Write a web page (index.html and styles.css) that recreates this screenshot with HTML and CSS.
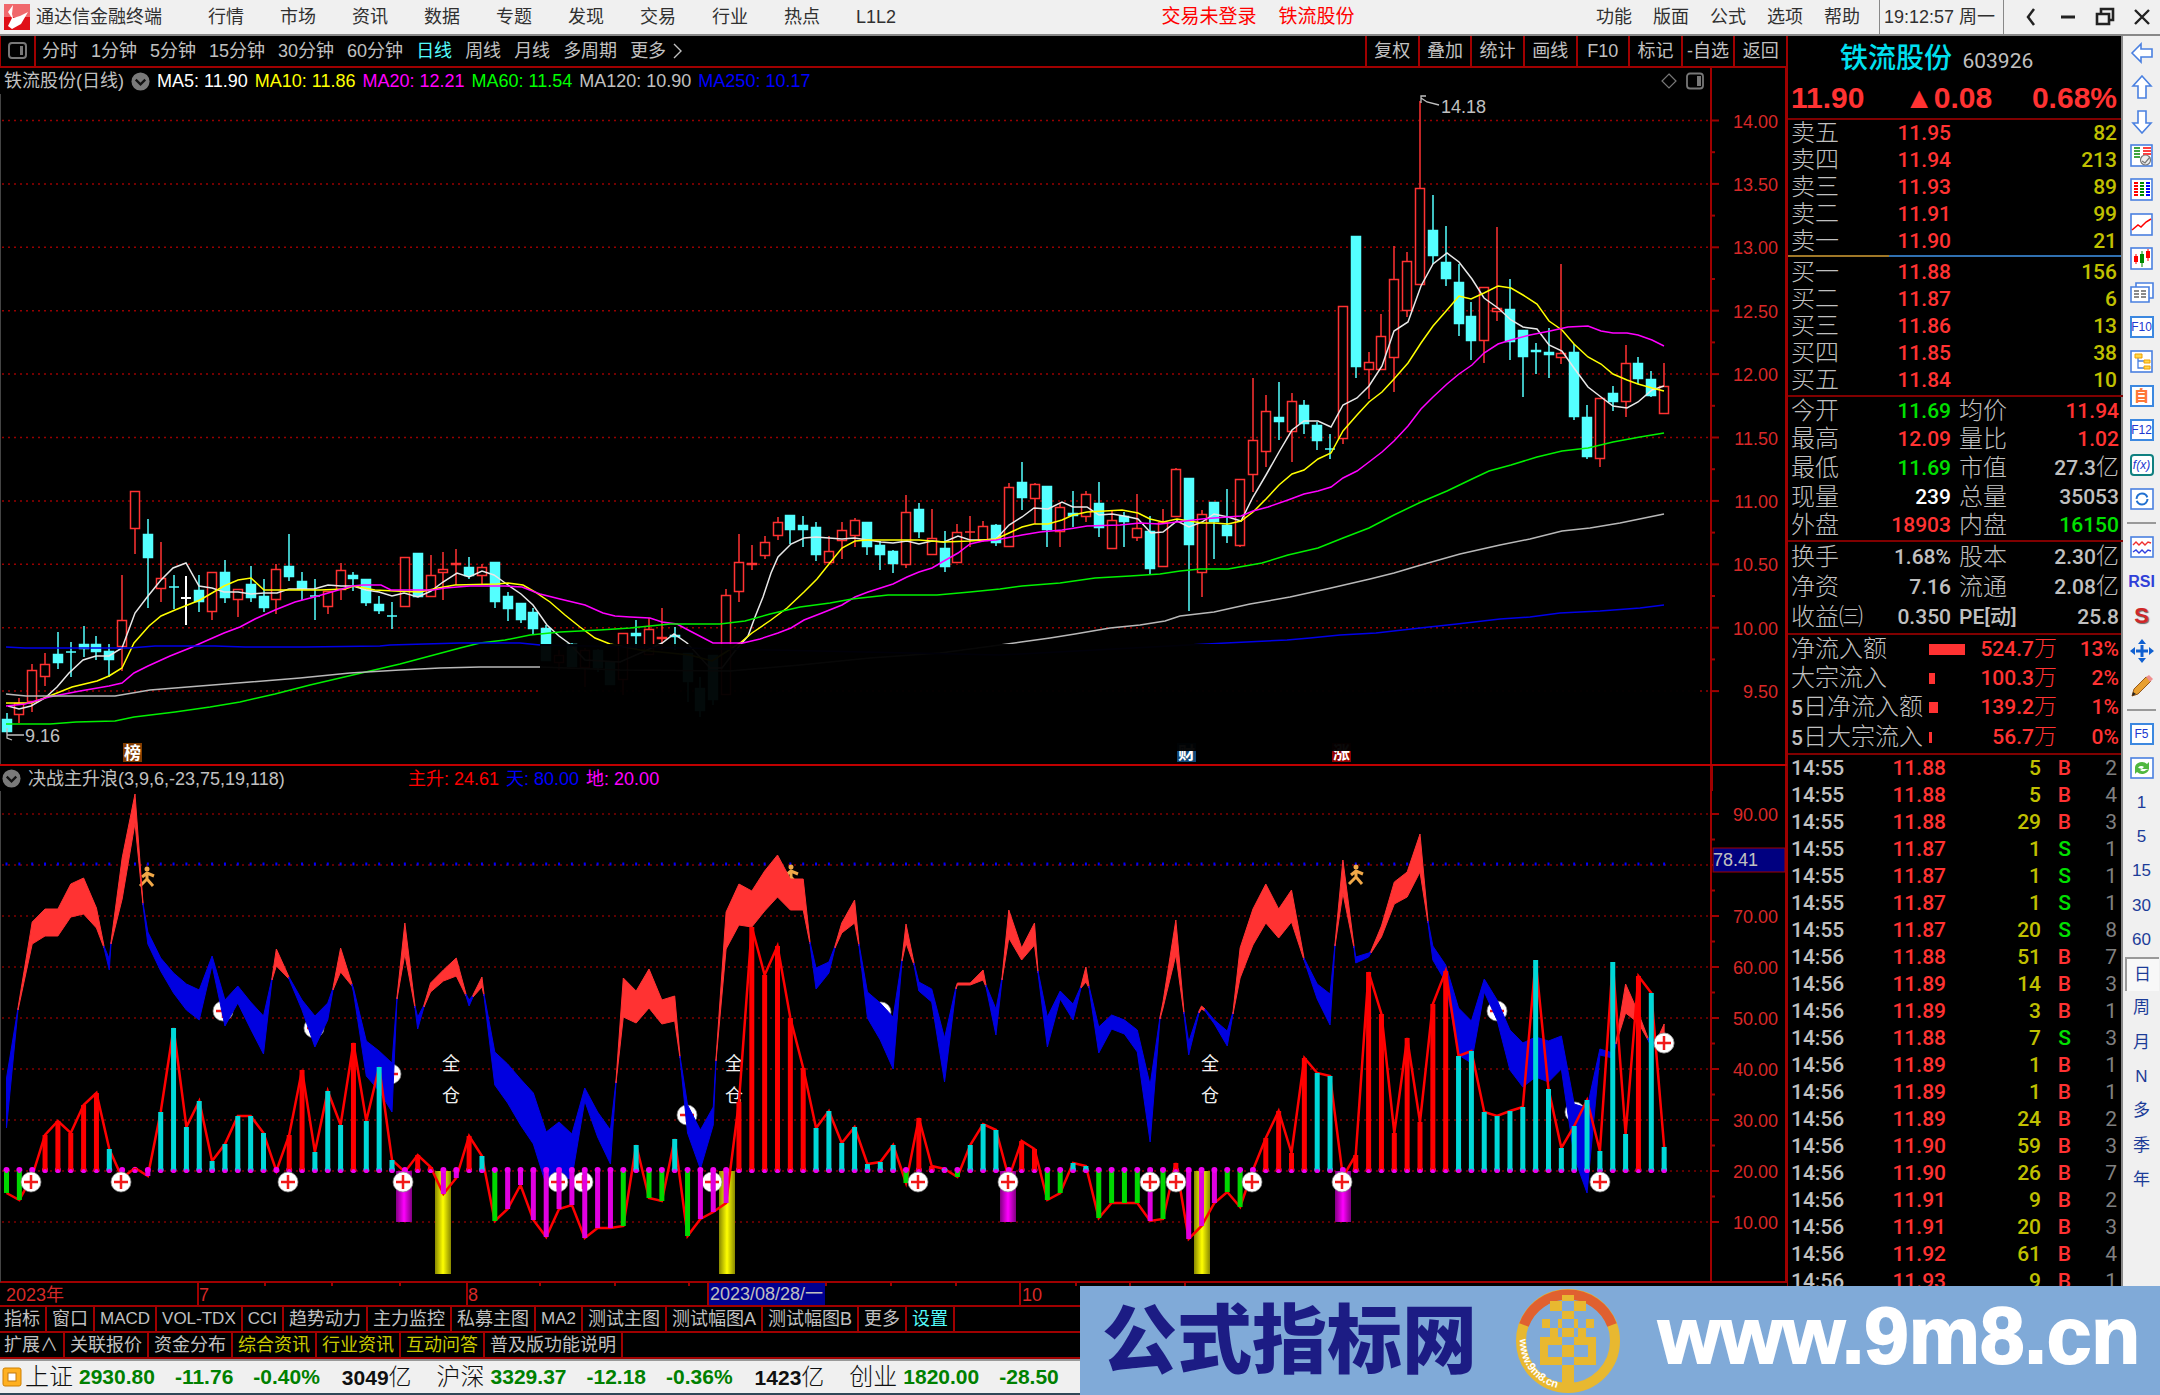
FILE: index.html
```html
<!DOCTYPE html>
<html lang="zh-CN">
<head>
<meta charset="utf-8">
<title>通达信金融终端</title>
<link rel="stylesheet" href="styles.css">
</head>
<body>
<header class="topbar">
  <svg class="logo" viewBox="0 0 26 26"><rect width="26" height="26" fill="#e01018"/><path d="M0 0h26v13H0z" fill="#f0686c"/><path d="M9 1 4 8l4 6-4 8 4 3 9-5 7-12-8 4-7 2-1-4z" fill="#fff"/></svg>
  <span class="brand">通达信金融终端</span>
  <nav class="menu">
    <a href="#">行情</a><a href="#">市场</a><a href="#">资讯</a><a href="#">数据</a><a href="#">专题</a><a href="#">发现</a><a href="#">交易</a><a href="#">行业</a><a href="#">热点</a><a href="#">L1L2</a>
  </nav>
  <div class="alerts"><a href="#">交易未登录</a><a href="#">铁流股份</a></div>
  <nav class="menu menu-right">
    <a href="#">功能</a><a href="#">版面</a><a href="#">公式</a><a href="#">选项</a><a href="#">帮助</a>
  </nav>
  <time class="clock">19:12:57 周一</time>
  <div class="winctl">
    <button type="button" aria-label="返回"><svg viewBox="0 0 20 20"><path d="M13 2 7 10l6 8" fill="none" stroke="#222" stroke-width="2.5"/></svg></button>
    <button type="button" aria-label="最小化"><svg viewBox="0 0 20 20"><path d="M3 10h14" stroke="#222" stroke-width="3"/></svg></button>
    <button type="button" aria-label="还原"><svg viewBox="0 0 20 20"><path d="M6 6V2h12v11h-4M2 7h12v10H2z" fill="none" stroke="#222" stroke-width="2.6"/></svg></button>
    <button type="button" aria-label="关闭"><svg viewBox="0 0 20 20"><path d="m3 3 14 14M17 3 3 17" stroke="#222" stroke-width="2.4"/></svg></button>
  </div>
</header>

<main class="work">
  <section class="charts">
    <div class="periods">
      <button type="button" class="dock" aria-label="侧栏"><svg viewBox="0 0 20 20"><rect x="1" y="2" width="17" height="15" rx="3" fill="none" stroke="#777" stroke-width="2"/><path d="M12 5h3v9h-3z" fill="#777"/></svg></button>
      <nav class="spans">
        <a href="#">分时</a><a href="#">1分钟</a><a href="#">5分钟</a><a href="#">15分钟</a><a href="#">30分钟</a><a href="#">60分钟</a><a href="#" class="on">日线</a><a href="#">周线</a><a href="#">月线</a><a href="#">多周期</a><a href="#">更多<svg class="more" viewBox="0 0 10 16"><path d="m1 1 7 7-7 7" fill="none" stroke="#c0c0c0" stroke-width="1.4"/></svg></a>
      </nav>
      <div class="tools">
        <button type="button">复权</button><button type="button">叠加</button><button type="button">统计</button><button type="button">画线</button><button type="button">F10</button><button type="button">标记</button><button type="button">-自选</button><button type="button">返回</button>
      </div>
    </div>
    <div class="legend">
      <div class="legend-items">
        <span class="t-gray">铁流股份(日线)</span>
        <svg class="chev" viewBox="0 0 20 20"><circle cx="10" cy="10" r="9.5" fill="#7a7a7a"/><path d="m5 8 5 5 5-5" fill="none" stroke="#111" stroke-width="2.4"/></svg>
        <span class="t-white">MA5: 11.90</span><span class="t-yellow">MA10: 11.86</span><span class="t-mag">MA20: 12.21</span><span class="t-green">MA60: 11.54</span><span class="t-gray">MA120: 10.90</span><span class="t-blue">MA250: 10.17</span>
      </div>
      <svg class="marks" viewBox="0 0 44 18"><path d="m9 2 7 7-7 7-7-7z" fill="none" stroke="#777" stroke-width="1.2"/><rect x="27" y="1.500" width="16" height="15" rx="3" fill="none" stroke="#777" stroke-width="1.8"/><path d="M37 4h4v10h-4z" fill="#777"/></svg>
      <div class="legend-axis"></div>
    </div>
    <svg id="price" class="plot" viewBox="0 94 1787 670" role="img" aria-label="日线"></svg>
    <div class="legend legend-sub">
      <div class="legend-items">
        <svg class="chev" viewBox="0 0 20 20"><circle cx="10" cy="10" r="9.5" fill="#7a7a7a"/><path d="m5 8 5 5 5-5" fill="none" stroke="#111" stroke-width="2.4"/></svg>
        <span class="t-gray formula">决战主升浪(3,9,6,-23,75,19,118)</span>
        <span class="t-red">主升: 24.61</span><span class="t-blue">天: 80.00</span><span class="t-mag">地: 20.00</span>
      </div>
      <div class="legend-axis boxed"></div>
    </div>
    <svg id="wave" class="plot" viewBox="0 791 1787 516" role="img" aria-label="决战主升浪"></svg>
    <nav class="tabs">
      <a href="#">指标</a><a href="#">窗口</a><a href="#" class="latin">MACD</a><a href="#" class="latin">VOL-TDX</a><a href="#" class="latin">CCI</a><a href="#">趋势动力</a><a href="#">主力监控</a><a href="#">私募主图</a><a href="#" class="latin">MA2</a><a href="#">测试主图</a><a href="#">测试幅图A</a><a href="#">测试幅图B</a><a href="#">更多</a><a href="#" class="on">设置</a>
    </nav>
    <nav class="tabs">
      <a href="#">扩展∧</a><a href="#">关联报价</a><a href="#">资金分布</a><a href="#" class="y">综合资讯</a><a href="#" class="y">行业资讯</a><a href="#" class="y">互动问答</a><a href="#">普及版功能说明</a>
    </nav>
  </section>

  <aside class="quote">
    <h1 class="stock"><span class="name">铁流股份</span> <span class="code">603926</span></h1>
    <div class="last"><b>11.90</b><b>▲0.08</b><b>0.68%</b></div>
    <table class="book asks">
      <tr><th>卖五</th><td>11.95</td><td>82</td></tr>
      <tr><th>卖四</th><td>11.94</td><td>213</td></tr>
      <tr><th>卖三</th><td>11.93</td><td>89</td></tr>
      <tr><th>卖二</th><td>11.91</td><td>99</td></tr>
      <tr><th>卖一</th><td>11.90</td><td>21</td></tr>
    </table>
    <div class="ratio"></div>
    <table class="book bids">
      <tr><th>买一</th><td>11.88</td><td>156</td></tr>
      <tr><th>买二</th><td>11.87</td><td>6</td></tr>
      <tr><th>买三</th><td>11.86</td><td>13</td></tr>
      <tr><th>买四</th><td>11.85</td><td>38</td></tr>
      <tr><th>买五</th><td>11.84</td><td>10</td></tr>
    </table>
    <table class="stats day">
      <tr><th>今开</th><td class="g">11.69</td><th>均价</th><td class="r">11.94</td></tr>
      <tr><th>最高</th><td class="r">12.09</td><th>量比</th><td class="r">1.02</td></tr>
      <tr><th>最低</th><td class="g">11.69</td><th>市值</th><td>27.3<i>亿</i></td></tr>
      <tr><th>现量</th><td class="w">239</td><th>总量</th><td>35053</td></tr>
      <tr><th>外盘</th><td class="r">18903</td><th>内盘</th><td class="g">16150</td></tr>
    </table>
    <table class="stats base">
      <tr><th>换手</th><td>1.68%</td><th>股本</th><td>2.30<i>亿</i></td></tr>
      <tr><th>净资</th><td>7.16</td><th>流通</th><td>2.08<i>亿</i></td></tr>
      <tr><th>收益㈢</th><td>0.350</td><th class="pe">PE[动]</th><td>25.8</td></tr>
    </table>
    <table class="flow">
      <tr><th>净流入额</th><td><span class="bar" style="width:36px"></span></td><td>524.7<i>万</i></td><td>13%</td></tr>
      <tr><th>大宗流入</th><td><span class="bar" style="width:6px"></span></td><td>100.3<i>万</i></td><td>2%</td></tr>
      <tr><th><span class="pe">5</span>日净流入额</th><td><span class="bar" style="width:9px"></span></td><td>139.2<i>万</i></td><td>1%</td></tr>
      <tr><th><span class="pe">5</span>日大宗流入</th><td><span class="bar" style="width:3px"></span></td><td>56.7<i>万</i></td><td>0%</td></tr>
    </table>
    <table class="ticks">
      <tr><td>14:55</td><td>11.88</td><td>5</td><td>B</td><td>2</td></tr>
      <tr><td>14:55</td><td>11.88</td><td>5</td><td>B</td><td>4</td></tr>
      <tr><td>14:55</td><td>11.88</td><td>29</td><td>B</td><td>3</td></tr>
      <tr class="s"><td>14:55</td><td>11.87</td><td>1</td><td>S</td><td>1</td></tr>
      <tr class="s"><td>14:55</td><td>11.87</td><td>1</td><td>S</td><td>1</td></tr>
      <tr class="s"><td>14:55</td><td>11.87</td><td>1</td><td>S</td><td>1</td></tr>
      <tr class="s"><td>14:55</td><td>11.87</td><td>20</td><td>S</td><td>8</td></tr>
      <tr><td>14:56</td><td>11.88</td><td>51</td><td>B</td><td>7</td></tr>
      <tr><td>14:56</td><td>11.89</td><td>14</td><td>B</td><td>3</td></tr>
      <tr><td>14:56</td><td>11.89</td><td>3</td><td>B</td><td>1</td></tr>
      <tr class="s"><td>14:56</td><td>11.88</td><td>7</td><td>S</td><td>3</td></tr>
      <tr><td>14:56</td><td>11.89</td><td>1</td><td>B</td><td>1</td></tr>
      <tr><td>14:56</td><td>11.89</td><td>1</td><td>B</td><td>1</td></tr>
      <tr><td>14:56</td><td>11.89</td><td>24</td><td>B</td><td>2</td></tr>
      <tr><td>14:56</td><td>11.90</td><td>59</td><td>B</td><td>3</td></tr>
      <tr><td>14:56</td><td>11.90</td><td>26</td><td>B</td><td>7</td></tr>
      <tr><td>14:56</td><td>11.91</td><td>9</td><td>B</td><td>2</td></tr>
      <tr><td>14:56</td><td>11.91</td><td>20</td><td>B</td><td>3</td></tr>
      <tr><td>14:56</td><td>11.92</td><td>61</td><td>B</td><td>4</td></tr>
      <tr><td>14:56</td><td>11.93</td><td>9</td><td>B</td><td>1</td></tr>
    </table>
  </aside>

  <aside class="rail">
    <div class="group long">
      <button type="button" aria-label="左"><svg viewBox="0 0 24 24"><path d="M2 12 11 3v5h11v8H11v5z" fill="#fff" stroke="#4a80e0" stroke-width="1.6"/></svg></button>
      <button type="button" aria-label="上"><svg viewBox="0 0 24 24"><path d="m12 1 9 10h-5v12H8V11H3z" fill="#fff" stroke="#4a80e0" stroke-width="1.6"/></svg></button>
      <button type="button" aria-label="下"><svg viewBox="0 0 24 24"><path d="m12 23 9-10h-5V1H8v12H3z" fill="#fff" stroke="#4a80e0" stroke-width="1.6"/></svg></button>
      <button type="button" aria-label="报价"><svg viewBox="0 0 24 24"><rect class="fr" x="1" y="1" width="21" height="21"/><path d="M4 4h6M4 7h6M4 10h6M4 13h6" stroke="#080" stroke-width="1.6"/><path d="M13 4h8M13 7h8M13 10h8" stroke="#f00" stroke-width="1.6"/><circle cx="15.500" cy="16" r="5" fill="#eee" stroke="#777" stroke-width="1.2"/><path d="m12 17 3 2 5-6" fill="none" stroke="#777" stroke-width="1.2"/></svg></button>
      <button type="button" aria-label="列表"><svg viewBox="0 0 24 24"><rect class="fr" x="1" y="1" width="21" height="21"/><path d="M4 5h4M4 8h4M4 11h4M4 14h4M4 17h4" stroke="#f00" stroke-width="1.8"/><path d="M10 5h4M10 8h4M10 11h4M10 14h4M10 17h4" stroke="#080" stroke-width="1.8"/><path d="M16 5h4M16 8h4M16 11h4M16 14h4M16 17h4" stroke="#00f" stroke-width="1.8"/></svg></button>
      <button type="button" aria-label="走势"><svg viewBox="0 0 24 24"><rect class="fr" x="1" y="1" width="21" height="21"/><path d="m2 17 6-5 3 2 5-5 5-3" fill="none" stroke="#f00" stroke-width="1.5"/></svg></button>
      <button type="button" aria-label="K线"><svg viewBox="0 0 24 24"><rect class="fr" x="1" y="1" width="21" height="21"/><path d="M6 7v10M18 2v12" stroke="#f00"/><path d="M4 9h4v6H4zM16 4h4v7h-4z" fill="#f00"/><path d="M12 4v16" stroke="#080"/><path d="M10 7h4v9h-4z" fill="#080"/></svg></button>
      <button type="button" aria-label="文档"><svg viewBox="0 0 24 24"><path class="fr" d="M6 2h17v15H6z"/><path class="fr" d="M1 6h18v15H1z"/><path d="M4 10h5M4 13h5M4 16h5M11 10h5M11 13h5M11 16h5" stroke="#666" stroke-width="1.3"/></svg></button>
      <button type="button" class="key">F10</button>
      <button type="button" aria-label="树"><svg viewBox="0 0 24 24"><rect class="fr" x="1" y="1" width="21" height="21"/><path d="M8 7v11h6M8 11h6" fill="none" stroke="#4a80e0" stroke-width="1.3"/><path d="M5 4h7v4H5zM14 10h6v3h-6zM14 16h6v3h-6z" fill="#ffd84a" stroke="#f0a000"/></svg></button>
      <button type="button" class="key zi">自</button>
      <button type="button" class="key">F12</button>
      <button type="button" class="key fx">f(x)</button>
      <button type="button" aria-label="刷新"><svg viewBox="0 0 24 24"><rect class="fr" x="1" y="2" width="22" height="20"/><circle cx="12" cy="12" r="5.500" fill="none" stroke="#2070d0" stroke-width="2" stroke-dasharray="15 2"/></svg></button>
    </div>
    <hr>
    <div class="group short">
      <button type="button" aria-label="叠加"><svg viewBox="0 0 24 24"><rect class="fr" x="1" y="2" width="22" height="20"/><path d="m3 10 3-3 3 3 3-3 3 3 3-3 3 1" fill="none" stroke="#f03030" stroke-width="1.4"/><path d="m3 17 3-2 3 3 3-3 3 3 3-3 3 1" fill="none" stroke="#3040e0" stroke-width="1.4"/></svg></button>
      <button type="button" class="rsi">RSI</button>
      <button type="button" class="dollar">S</button>
      <button type="button" aria-label="移动"><svg viewBox="0 0 24 24"><path d="m12 0 4 5H8zM12 24l4-5H8zM0 12l5-4v8zM24 12l-5-4v8zM10.500 6h3v12h-3zM6 10.500h12v3H6z" fill="#1060d0"/></svg></button>
      <button type="button" aria-label="画笔"><svg viewBox="0 0 24 24"><path d="m2 22 2-7L16 3l5 4L8 20z" fill="#e8a030" stroke="#94581c"/><path d="m16 3 3-2 4 4-3 3z" fill="#f09090"/><path d="m2 22 1-4 3 2z" fill="#222"/></svg></button>
    </div>
    <hr>
    <div class="group long">
      <button type="button" class="key">F5</button>
      <button type="button" aria-label="更新"><svg viewBox="0 0 24 24"><rect class="fr" x="1" y="2" width="22" height="20"/><path d="M5 11a7 6 0 0 1 12-3l2-2v7h-7l2-2a4 4 0 0 0-6 1zM19 13a7 6 0 0 1-12 3l-2 2v-7l7 2-2 1a4 4 0 0 0 6 0z" fill="#50b840"/></svg></button>
      <button type="button">1</button><button type="button">5</button><button type="button">15</button><button type="button">30</button><button type="button">60</button><button type="button" class="down">日</button><button type="button">周</button><button type="button">月</button><button type="button">N</button><button type="button">多</button><button type="button">季</button><button type="button">年</button>
    </div>
  </aside>
</main>

<footer class="status">
  <svg class="home" viewBox="0 0 20 20"><rect x="1" y="1" width="18" height="18" rx="2" fill="#ffb020" stroke="#d08000"/><rect x="6" y="6" width="8" height="8" fill="#fff" stroke="#c07810"/></svg>
  <div class="idx"><span class="lbl">上证</span><b>2930.80</b><b>-11.76</b><b>-0.40%</b><b class="amt">3049<i>亿</i></b></div>
  <div class="idx"><span class="lbl">沪深</span><b>3329.37</b><b>-12.18</b><b>-0.36%</b><b class="amt">1423<i>亿</i></b></div>
  <div class="idx"><span class="lbl">创业</span><b>1820.00</b><b>-28.50</b></div>
</footer>

<div class="banner">
  <strong class="site">公式指标网</strong>
  <svg class="coin" viewBox="0 0 108 108">
    <circle cx="54" cy="54" r="47" fill="none" stroke="#e8b830" stroke-width="10"/>
    <path d="M10 38A47 47 0 0 1 98 38" fill="none" stroke="#e06030" stroke-width="10"/>
    <path d="M36 14h36v10H36zM48 8h12v92H48zM28 32h52v9H28zM36 32h8v18h-8zM64 32h8v18h-8zM26 50h56v28H26zM34 58v12h40V58z" fill="#e8b830" fill-rule="evenodd"/>
    <path id="arc" d="M6 52A48 48 0 0 0 58 102" fill="none"/>
    <text class="arc-text"><textPath href="#arc">www.9m8.cn</textPath></text>
  </svg>
  <strong class="url">www.9m8.cn</strong>
</div>
<script src="chart.js"></script>
</body>
</html>
```
FILE: styles.css
```css
* { box-sizing: border-box; }
body {
  margin: 0; min-height: 100vh; position: relative; display: flex; flex-direction: column;
  background: #000; color: #c0c0c0;
  font: 18px/24px "Liberation Sans", "Noto Sans CJK SC", sans-serif;
}
a { color: inherit; text-decoration: none; white-space: nowrap; }
button { font: inherit; color: inherit; background: none; border: 0; padding: 0; white-space: nowrap; }
table { border-collapse: collapse; table-layout: fixed; width: 100%; }
th, td { padding: 0; font-weight: inherit; }
i { font-style: normal; font-weight: 300; }

.topbar { display: flex; align-items: center; height: 36px; background: #f0f0f0; color: #303030; border-bottom: 2px solid #888; padding-left: 4px; }
.logo { width: 26px; height: 26px; margin-right: 6px; }
.brand { width: 172px; white-space: nowrap; }
.menu { display: flex; gap: 36px; }
.alerts { display: flex; gap: 22px; color: #f00; margin: 0 auto; padding-left: 24px; font-size: 19px; }
.menu-right { gap: 21px; margin-right: 19px; }
.clock { border: solid #888; border-width: 0 1px; width: 125px; line-height: 34px; padding-left: 4px; white-space: nowrap; }
.winctl { display: flex; width: 156px; justify-content: space-around; padding-left: 9px; }
.winctl button { width: 24px; height: 24px; }
.winctl svg { width: 20px; height: 20px; display: block; margin: 2px; }

.work { display: grid; grid-template-columns: minmax(0, 1fr) 336px 37px; flex: 1; }
.charts { display: flex; flex-direction: column; min-width: 0; }
.periods { display: flex; height: 32px; border-bottom: 2px solid #a00000; line-height: 30px; }
.dock { width: 36px; border: solid #a00000; border-width: 0 2px 0 1px; }
.dock svg { width: 20px; height: 20px; display: block; margin: 0 auto; }
.spans { display: flex; gap: 13px; padding-left: 6px; }
.spans .on, .tabs .on { color: #54fcfc; }
.more { width: 10px; height: 16px; margin-left: 7px; vertical-align: -2px; }
.tools { display: grid; grid-template-columns: repeat(8, 1fr); width: 422px; margin-left: auto; border-right: 1px solid #a00000; }
.tools button { border-left: 2px solid #a00000; }

.legend { display: flex; align-items: center; height: 26px; }
.legend-items { display: flex; align-items: center; gap: 7px; padding-left: 4px; white-space: nowrap; flex: 1; }
.chev { width: 19px; height: 19px; }
.marks { width: 44px; height: 18px; margin-right: 6px; }
.legend-axis { width: 77px; align-self: stretch; border: solid #a00000; border-width: 0 2px; }
.legend-sub { height: 27px; border-top: 2px solid #c00000; }
.legend-sub .legend-items { padding-left: 2px; }
.legend-axis.boxed { border-left-width: 3px; }
.formula { width: 373px; }
.t-gray { color: #c0c0c0; } .t-white { color: #fff; } .t-yellow { color: #ff0; } .t-mag { color: #f0f; }
.t-green { color: #0f0; } .t-blue { color: #00f; } .t-red { color: #f00; }

.plot { display: block; width: 100%; height: auto; font-size: 18px; }
.grid { stroke: #980000; stroke-width: 1.5; stroke-dasharray: 2 4; }
.grid-dim { stroke: #800000; stroke-width: 1.5; stroke-dasharray: 2 4; }
.axis { stroke: #a00000; stroke-width: 2; fill: none; }
.scale { fill: #d82828; }
.note { fill: #c0c0c0; }
.call { fill: #f0f0f0; }
.ma { fill: none; stroke-width: 1.5; }
.up { stroke: #ff3232; stroke-width: 1.5; fill: #000; }
.dn { stroke: #54ffff; stroke-width: 1.5; fill: #54ffff; }
.eq { stroke: #fff; stroke-width: 2; }
.tag { font-size: 17px; fill: #fff; font-weight: 700; }

.tabs { display: flex; height: 26px; line-height: 24px; border-bottom: 2px solid #a00000; }
.tabs a { padding: 0 5px; border-right: 2px solid #a00000; }
.tabs a:first-child { padding-left: 4px; }
.tabs .latin { font-size: 17px; }
.tabs .y { color: #c8c800; }

.quote { border-left: 1px solid #a00000; border-right: 2px solid #888; font-family: Roboto, "Noto Sans CJK SC", sans-serif; font-size: 21px; font-weight: 500; color: #c0c0c0; }
.quote th { text-align: left; font-size: 24px; line-height: 27px; font-weight: 300; white-space: nowrap; }
.quote td { text-align: right; white-space: nowrap; line-height: 27px; }
.quote i { font-size: 23px; line-height: 24px; }
.stock { margin: 0; height: 40px; line-height: 36px; font-weight: 400; padding-left: 52px; }
.stock .name { font-size: 28px; font-weight: 500; color: #00e0f0; }
.stock .code { font-size: 21px; }
.last { display: flex; justify-content: space-between; height: 44px; line-height: 44px; padding: 0 4px 0 3px; border-bottom: 2px solid #800000; font-family: "Liberation Sans", sans-serif; font-size: 30px; color: #ff3232; }
.last b { font-weight: 700; }
.quote th:first-child, .ticks td:first-child { padding-left: 3px; }
.quote td:last-child { padding-right: 4px; }
.book th { width: 80px; }
.book td:nth-child(2) { width: 83px; color: #ff3232; }
.book td:last-child { color: #c0c000; }
.ratio { height: 2px; background: linear-gradient(90deg, #a07828 0 101px, #3070b0 101px); }
.bids { margin: 2px 0 1px; }
.stats { border-top: 2px solid #800000; height: 145px; }
.stats.base { height: 93px; }
.stats th { width: 72px; }
.stats td { width: 91px; }
.stats th:nth-child(3) { width: 68px; padding-left: 8px; }
.stats td:last-child { width: 104px; }
.stats .g { color: #00e000; } .stats .r { color: #ff3232; } .stats .w { color: #fff; }
.quote .pe { font-size: 21px; font-weight: 500; }
.flow { border-top: 2px solid #800000; height: 120px; color: #ff3232; }
.flow th { width: 141px; color: #c0c0c0; }
.flow td:nth-child(2) { width: 37px; }
.flow td:nth-child(3) { width: 91px; }
.flow .bar { display: block; height: 11px; background: #ff3232; }
.quote .flow td:last-child { padding-right: 2px; }
.ticks { border-top: 2px solid #800000; }
.ticks td:first-child { width: 75px; text-align: left; }
.ticks td:nth-child(2) { width: 83px; color: #ff3232; }
.ticks td:nth-child(3) { width: 95px; color: #c0c000; }
.ticks td:nth-child(4) { width: 30px; color: #ff3232; }
.ticks .s td:nth-child(4) { color: #00e000; }
.ticks td:last-child { color: #808080; font-weight: 400; }

.rail { background: #f0f0f0; color: #1c3c98; font-size: 17px; }
.group { display: grid; grid-auto-rows: 1fr; justify-items: center; }
.group.long { height: 480px; }
.group.short { height: 173px; }
.group button { width: 34px; min-height: 0; display: flex; align-items: center; justify-content: center; }
.group svg { width: 24px; height: 24px; }
.fr { fill: #fff; stroke: #4a80e0; stroke-width: 1.6; }
.rail hr { border: 0; border-top: 2px solid #999; margin: 6px 4px; }
.group .key { width: 24px; height: 22px; align-self: center; background: #fff; border: 2px solid #3c88e0; font-size: 12px; line-height: 18px; color: #2038d0; }
.group .zi { color: #ff7838; font-size: 15px; font-weight: 900; }
.group .fx { border-color: #108080; border-radius: 4px; font-style: italic; }
.group .rsi { font-weight: 700; font-size: 16px; color: #3040d8; }
.group .dollar { font-weight: 700; font-size: 22px; color: #d02828; text-shadow: 1px 1px 1px #666; }
.group .down { border: solid #999; border-width: 2px 0 0 2px; background: #f8f8f8; }

.status { display: flex; align-items: center; height: 36px; background: #f0f0f0; border-top: 2px solid #999; border-bottom: 2px solid #304858; font-size: 21px; color: #008000; padding-left: 2px; white-space: nowrap; }
.home { width: 20px; height: 20px; }
.idx { display: flex; align-items: center; padding-left: 3px; margin-right: 22px; gap: 20px; }
.idx .lbl { font-size: 24px; font-weight: 300; color: #101010; margin-right: -14px; }
.idx .amt { color: #101010; padding-left: 2px; }
.idx i { font-size: 23px; }

.banner { position: absolute; right: 0; bottom: 0; width: 50%; height: 109px; display: flex; align-items: center; justify-content: space-between; padding: 0 20px 0 22px; background: #80aad8; white-space: nowrap; }
.site { font: 900 75px/100px "Noto Sans CJK SC", sans-serif; color: #1c1c84; padding-bottom: 12px; }
.coin { width: 108px; height: 108px; }
.arc-text { font: 700 11px "Liberation Sans", sans-serif; fill: #fff; }
.url { font: 700 80px/100px "Liberation Sans", sans-serif; color: #fff; -webkit-text-stroke: 2px #fff; padding-bottom: 10px; }
```
FILE: chart.js
```js
// Horizontal position of the n-th trading day.
const X = n => 6.5 + 12.85 * n;

// Candles: type, high, body top, body bottom, low.
const candles = `c713,719,732,732 r698,703,715,723 r664,670,702,712 r653,664,677,686 c632,654,663,669 c642,652,652,677 c626,644,649,657 c636,644,652,660 c644,651,660,677 r575,620,647,671
r491,491,529,554 c519,534,558,608 r542,578,589,602 c575,587,587,609 w576,598,598,625 c575,590,602,612 r572,572,612,620 c560,572,598,603 r589,589,600,617 c566,584,598,602
c579,596,608,612 r564,569,600,614 c534,566,577,581 c572,581,589,600 c579,596,596,620 r591,591,607,614 r563,570,590,600 c572,575,579,591 c579,579,603,606 c596,604,611,614
c602,616,616,629 r557,557,607,607 c553,553,597,597 r555,575,597,597 r552,569,573,600 r549,563,565,585 c557,567,576,579 r564,567,576,585 c562,562,602,608 c592,596,609,621
c603,603,620,623 c608,612,629,635 c625,628,661,661 r650,655,663,670 c643,644,667,667 r648,650,668,687 c649,650,668,672 c661,662,685,685 r633,633,680,695 c620,633,636,650
r618,629,655,655 r608,637,639,650 c627,635,637,650 c653,653,682,702 c677,688,711,717 c655,655,700,705 r589,595,695,695 r534,562,592,602 r545,563,565,570 r536,542,556,559
r517,522,536,540 c515,515,530,544 c516,525,530,547 c522,527,555,561 r536,551,563,563 r522,530,541,559 r518,520,536,547 c522,522,547,555 c541,545,555,570 c550,551,564,573
r495,512,565,568 c503,509,532,538 r509,538,555,555 c531,548,567,572 r524,532,563,563 r516,532,532,547 r521,526,541,542 c524,525,543,546 r483,487,547,547 c462,482,498,510
r483,484,499,524 c486,486,530,547 r503,507,532,547 c491,513,516,527 r491,494,517,522 c482,503,528,537 r511,520,549,549 c512,516,522,547 r494,528,538,541 c516,531,569,575
r509,522,567,567 r468,469,517,517 c478,478,545,611 r510,514,573,597 c502,502,522,559 c489,525,536,543 r479,479,546,547 r378,440,475,492 r395,411,452,467 c382,417,422,440
r393,401,432,462 c400,405,424,434 c422,425,441,450 c434,449,449,459 r306,306,439,444 c236,236,367,378 r352,362,370,399 r314,336,370,370 r246,279,358,392 r252,261,311,317
r101,188,285,285 c195,230,256,264 c226,262,279,286 c264,282,324,336 c302,316,341,360 r287,287,341,363 r227,308,312,321 c279,309,342,360 c330,330,357,397 c343,350,352,374
c328,352,355,378 r264,353,358,364 c344,352,417,420 c405,417,457,459 r398,398,459,467 c386,393,402,411 r345,363,402,417 c357,363,379,384 c371,379,396,397 r363,386,414,414`.split(/\s+/);

const averages = {
  '#e8e8e8': '8,706 19,709 31,706 45,698 57,687 69,673 83,660 96,656 109,656 122,648 135,613 148,596 161,580 173,568 186,563 199,586 212,588 224,592 238,592 251,594 264,593 277,593 289,589 302,589 314,589 328,585 341,586 353,586 366,590 379,592 392,596 404,593 418,597 431,591 443,582 457,573 469,577 482,571 494,575 508,585 521,594 533,605 547,625 559,636 570,644 585,660 620,662 645,651 662,643 674,634 687,643 710,668 722,668 735,651 748,636 755,617 763,597 771,573 778,557 791,544 804,538 816,537 829,538 842,539 854,538 868,540 881,542 893,543 907,541 919,544 932,541 944,542 958,536 970,540 983,540 996,539 1009,525 1022,517 1034,508 1048,509 1062,502 1073,507 1087,507 1099,515 1112,514 1124,516 1138,519 1151,533 1163,532 1177,521 1189,527 1202,522 1214,514 1228,517 1241,521 1253,497 1266,475 1279,452 1292,430 1304,421 1318,421 1331,427 1343,405 1357,398 1369,386 1382,366 1394,331 1408,322 1421,286 1433,264 1447,253 1459,262 1472,279 1484,298 1498,308 1511,320 1523,327 1537,329 1549,345 1562,351 1574,368 1588,387 1601,397 1613,406 1627,408 1638,402 1652,390 1664,386',
  '#ffff00': '6,703 20,703 31,703 47,697 72,687 97,681 109,676 122,668 134,643 149,626 161,616 175,610 200,600 212,593 224,586 238,580 251,578 264,590 290,590 320,590 345,589 354,586 375,590 395,591 420,592 438,588 455,585 497,584 508,583 523,585 535,592 550,602 565,615 580,627 595,638 610,644 640,650 690,655 712,661 726,652 740,643 752,633 771,620 787,608 804,592 817,579 829,564 842,548 855,541 868,540 893,540 919,540 944,542 970,541 996,539 1009,533 1022,527 1034,524 1048,524 1062,520 1073,515 1087,512 1105,511 1122,510 1138,513 1150,519 1163,522 1177,519 1189,521 1202,523 1214,523 1228,524 1241,521 1253,512 1266,499 1279,485 1292,474 1304,470 1318,459 1331,453 1343,431 1357,415 1369,402 1382,392 1394,379 1408,363 1421,343 1433,326 1447,310 1459,296 1471,299 1484,293 1498,286 1511,288 1523,295 1537,304 1549,321 1562,330 1574,344 1588,357 1601,364 1613,374 1627,380 1638,384 1652,388 1664,391',
  '#ff00ff': '6,706 25,704 49,697 80,691 109,686 122,683 134,673 148,666 170,656 190,648 208,640 224,633 240,627 255,619 275,610 295,602 318,596 335,591 352,586 363,585 381,585 391,590 433,590 445,588 470,586 505,586 522,587 540,594 560,599 585,605 603,613 615,616 630,617 650,618 662,622 677,624 690,631 713,643 743,643 760,639 778,633 791,628 804,620 822,613 842,605 855,597 868,592 893,584 907,577 919,572 932,568 944,561 958,553 970,544 983,541 996,540 1022,535 1040,532 1062,530 1075,528 1087,526 1120,525 1140,523 1160,524 1177,522 1202,519 1214,518 1241,516 1253,511 1268,507 1288,500 1304,494 1318,491 1331,487 1343,478 1357,471 1369,462 1382,452 1394,441 1408,426 1421,409 1433,397 1447,384 1459,374 1472,365 1484,353 1498,344 1511,340 1530,335 1550,331 1568,327 1588,326 1601,331 1613,333 1627,333 1638,335 1652,340 1664,346',
  '#00f000': '6,724 50,724 76,722 115,721 134,717 175,712 210,707 240,702 275,694 310,685 340,678 370,671 400,664 430,656 460,648 480,643 505,640 530,635 560,632 600,630 630,628 650,626 670,624 720,624 745,621 770,614 800,607 830,603 852,599 888,595 937,595 970,592 1000,589 1022,586 1060,583 1095,578 1130,576 1160,574 1180,571 1200,569 1228,569 1245,566 1262,563 1288,555 1318,548 1343,538 1369,528 1394,515 1421,502 1447,491 1472,479 1489,471 1511,465 1537,457 1562,451 1588,448 1613,442 1640,437 1664,433',
  '#b8b8b8': '6,694 26,696 115,696 150,690 200,686 250,682 300,678 350,673 400,670 440,668 480,667 540,667 620,670 730,671 800,665 870,658 940,653 1000,645 1021,642 1050,638 1075,634 1110,628 1140,625 1165,621 1180,616 1214,612 1250,604 1290,597 1331,588 1370,579 1394,573 1421,565 1460,554 1500,545 1530,539 1562,531 1590,528 1620,523 1664,514',
  '#0000e8': '6,647 25,648 130,648 155,646 215,646 245,647 305,647 380,646 390,645 460,643 520,643 540,645 1000,655 1226,643 1287,640 1310,638 1340,635 1376,633 1420,628 1457,624 1500,619 1530,617 1560,613 1600,611 1640,608 1664,605'
};

const hline = (y, cls) => `<path class="${cls}" d="M2 ${y}H1709"/>`;
const price = v => 120.5 + (14 - v) * 126.8;

function drawPrice() {
  let s = '';
  for (let v = 9.5; v <= 14; v += 0.5) {
    const y = price(v);
    s += hline(y, 'grid') + `<path class="axis" d="M1711 ${y}h8"/><text class="scale" x="1778" y="${y + 7}" text-anchor="end">${v.toFixed(2)}</text>`;
    if (v < 14) s += `<path class="axis" d="M1711 ${y - 31.7}h4"/>`;
  }
  candles.forEach((c, n) => {
    const [h, t, b, l] = c.slice(1).split(',').map(Number);
    const cls = { r: 'up', c: 'dn', w: 'eq' }[c[0]];
    const x = Math.round(X(n));
    if (b - t < 1) {
      s += `<path class="${cls}" d="M${x} ${h}V${l}M${x - 5} ${t}h10"/>`;
    } else {
      s += `<path class="${cls}" d="M${x} ${h}V${t}M${x} ${b}V${l}"/><rect class="${cls}" x="${x - 4.5}" y="${t + .5}" width="9" height="${Math.max(1, b - t - 1)}"/>`;
    }
  });
  for (const color in averages) s += `<polyline class="ma" stroke="${color}" points="${averages[color]}"/>`;
  const tag = (x, y, fill, ch) => `<rect x="${x}" y="${y}" width="19" height="19" fill="${fill}"/><text class="tag" x="${x + 1}" y="${y + 16}">${ch}</text>`;
  s += tag(1177, 743, '#104878', '财') + tag(1332, 743, '#900000', '涨');
  s += '<rect x="540" y="644" width="1160" height="107" fill="#000" opacity=".96"/>';
  s += tag(123, 743, '#803c00', '榜');
  s += '<path d="M1426 96h-5v7M1421 98l6 4 12 3" fill="none" stroke="#c0c0c0" stroke-width="1.3"/><text class="note" x="1441" y="113">14.18</text>';
  s += '<path d="M7 728v10l5 2M7 735h17" fill="none" stroke="#c0c0c0" stroke-width="1.3"/><text class="note" x="25" y="742">9.16</text>';
  s += '<path class="axis" d="M1711 94V764M1786 94V764"/><path d="M.5 94V764" stroke="#444"/>';
  document.getElementById('price').innerHTML = s;
}

// Ribbon: "x,y" is a colour change, "#n,top,bottom" a day.
const ribbon = [
  ['b', '#0,1078,1128 18,1009'],
  ['r', '18,1009 #2,922,944 #3,909,936 #4,909,936 #5,884,917 #6,878,914 #7,908,928 104,947'],
  ['b', '104,947 #8,959,970 111,943'],
  ['r', '111,943 #9,858,899 #10,794,823 143,904'],
  ['b', '143,904 #11,932,944 #12,958,971 #13,973,993 #14,984,1010 #15,990,1020 #16,956,965 #17,1000,1026 #18,986,1003 #19,1002,1029 #20,1016,1054 272,979'],
  ['r', '272,979 #21,949,966 289,978'],
  ['b', '289,978 #23,1000,1010 #24,1016,1047 #25,1003,1020 333,989'],
  ['r', '333,989 #26,948,972 352,985'],
  ['b', '352,985 #27,988,992 #28,1041,1076 #29,1051,1091 #30,1063,1112 397,998'],
  ['r', '397,998 #31,923,954 415,1007'],
  ['b', '415,1007 #32,1017,1029 424,1006'],
  ['r', '424,1006 #33,983,992 #34,970,981 #35,958,976 466,995'],
  ['b', '466,995 #36,1000,1006 473,996'],
  ['r', '473,996 #37,977,987 484,995'],
  ['b', '484,995 #38,1052,1085 #39,1064,1103 #40,1079,1125 #41,1093,1144 #42,1132,1185 #43,1122,1180 #44,1134,1178 #45,1088,1101 #46,1112,1137 #47,1130,1164 616,1082'],
  ['r', '616,1082 #48,978,1017 #49,991,1023 #50,969,1008 #51,1000,1024 #52,996,1021 680,1057'],
  ['b', '680,1057 #53,1105,1133 #54,1130,1169 #55,1107,1125 716,1060'],
  ['r', '716,1060 #56,912,949 #57,884,925 #58,891,927 #59,871,911 #60,855,897 #61,879,910 #62,879,910 810,943'],
  ['b', '810,943 #63,968,989 #64,962,973 835,947'],
  ['r', '835,947 #65,923,933 #66,900,923 859,945'],
  ['b', '859,945 #67,992,1018 #68,1003,1040 #69,1017,1069 902,960'],
  ['r', '902,960 #70,924,943 914,964'],
  ['b', '914,964 #71,982,991 #72,989,1002 #73,1038,1082 956,988'],
  ['r', '956,988 #74,983,985 #75,983,985 #76,970,980 986,986'],
  ['b', '986,986 #77,1009,1035 1002,979'],
  ['r', '1002,979 #78,910,938 #79,948,960 #80,923,945 1038,972'],
  ['b', '1038,972 #81,1017,1047 #82,991,999 #83,1004,1020 1081,987'],
  ['r', '1081,987 #84,967,982 1089,987'],
  ['b', '1089,987 #85,1027,1053 #86,1015,1029 #87,1020,1034 #88,1030,1052 #89,1085,1142 1160,1018'],
  ['r', '1160,1018 #90,1002,1008 #91,920,955 1184,1013'],
  ['b', '1184,1013 #92,1042,1055 1199,1012'],
  ['r', '1199,1012 #93,1006,1009 1205,1010'],
  ['b', '1205,1010 #94,1020,1024 #95,1031,1046 1233,1013'],
  ['r', '1233,1013 #96,948,978 #97,909,945 #98,884,923 #99,909,938 #100,890,922 1304,959'],
  ['b', '1304,959 #102,984,999 #103,994,1025 1335,945'],
  ['r', '1335,945 #104,860,893 1354,947'],
  ['b', '1354,947 #105,957,963 #106,953,957 1371,952'],
  ['r', '1371,952 #107,926,937 #108,882,904 #109,872,897 #110,834,872 1428,922'],
  ['b', '1428,922 #111,946,960 #112,965,982 #113,1008,1055 #114,1021,1063 #115,979,992 #116,1000,1020 #117,1030,1070 #118,1043,1087 #119,1037,1077 #120,1041,1082 #121,1036,1069 #122,1104,1157 #123,1108,1193 #124,1049,1055 #125,1053,1058 1616,1043'],
  ['r', '1616,1043 #126,984,1013 #127,1013,1023 1648,1039'],
  ['b', '1648,1039 #128,1042,1047 1656,1043'],
  ['r', '1656,1043 #129,1024,1041']
];

// Strength bars: colour and value; "-" keeps the line but draws no bar.
const bars = `g1193 g1200 -1176 r1135 r1121 r1133 r1105 r1093 c1149 -1178 r1168 m1176 c1112 c1028 c1127 c1101 c1161 c1144 c1116 c1116 c1133 g1171 r1135 r1070 c1152 c1091 c1125 r1043 c1121 c1067
c1160 -1172 r1155 r1167 m1194 m1178 r1136 c1156 g1221 m1209 m1185 m1220 m1237 m1209 m1205 m1238 m1228 m1228 g1226 c1145 g1198 g1201 c1139 g1236 m1219 m1212 m1203 r1102 r927 r975
r946 r1018 r1068 c1128 c1111 c1143 c1127 c1164 c1162 c1145 g1183 r1118 r1166 c1169 g1177 c1145 c1124 c1130 -1178 r1141 r1149 g1200 g1193 c1163 c1166 g1218 g1203 g1203 g1203 m1221
g1219 r1163 m1239 m1226 m1203 g1192 g1207 -1170 r1138 r1111 r1153 r1058 c1073 c1076 -1177 r1155 r972 r1014 r1133 r1038 r1122 r1004 r971 c1056 c1051 c1112 c1116 c1111 c1107 c960
c1089 c1148 c1126 c1100 c1151 c962 c1134 r976 c993 c1147`.split(/\s+/);
const barColor = { r: '#ff0000', c: '#00d8d8', g: '#00d800', m: '#e000e0' };

const cross = (x, y) => `<circle cx="${x}" cy="${y}" r="10" fill="#fff" stroke="#888" stroke-width=".7"/><path d="M${x - 7} ${y}h14M${x} ${y - 7}v14" stroke="#f01818" stroke-width="2.5"/>`;
const crosses = list => list.map(p => cross(...p)).join('');
const runner = (x, y) => `<g transform="translate(${x} ${y})" stroke="#f0a848" stroke-width="3" fill="none"><circle cx="0" cy="-8" r="1.5" fill="#f0a848" stroke-width="2"/><path d="M0-5v7l6 7M0 2-7 9M-5 0 0-4 7-1"/></g>`;

function ribbonShape([color, text]) {
  const top = [], bottom = [];
  for (const token of text.split(' ')) {
    const v = token.replace('#', '').split(',').map(Number);
    if (token[0] === '#') { top.push([X(v[0]), v[1]]); bottom.unshift([X(v[0]), v[2]]); }
    else { top.push([v[0], v[1] - 1]); bottom.unshift([v[0], v[1] + 1]); }
  }
  const fill = color === 'r' ? '#ff3232' : '#0000e0';
  return `<polygon points="${top.concat(bottom).join(' ')}" fill="${fill}" stroke="${fill}" stroke-width="1"/>`;
}

function drawWave() {
  let s = `<defs><linearGradient id="gy"><stop stop-color="#888800"/><stop offset=".5" stop-color="#ff0"/><stop offset="1" stop-color="#888800"/></linearGradient>
    <linearGradient id="gm"><stop stop-color="#800080"/><stop offset=".5" stop-color="#f0f"/><stop offset="1" stop-color="#800080"/></linearGradient></defs>`;
  for (let v = 10; v <= 90; v += 10) {
    const y = 1273 - v * 5.1;
    s += hline(y, 'grid-dim') + `<path class="axis" d="M1712 ${y}h7M1712 ${y - 25.5}h3"/>`;
    if (v !== 80) s += `<text class="scale" x="1778" y="${y + 7}" text-anchor="end">${v}.00</text>`;
  }
  for (let n = 0; n < 130; n++) s += `<path d="M${X(n) - 1} 864h2" stroke="#0000ff" stroke-width="3"/>`;
  for (const x of [435, 719, 1194]) s += `<rect x="${x}" y="1171" width="16" height="103" fill="url(#gy)"/>`;
  for (const x of [396, 1000, 1335]) s += `<rect x="${x}" y="1171" width="16" height="51" fill="url(#gm)"/>`;
  for (const x of [442, 725, 1201]) s += `<text class="call" x="${x}" y="1070">全</text><text class="call" x="${x}" y="1102">仓</text>`;
  s += crosses([[223, 1011], [314, 1028], [391, 1074], [687, 1115], [881, 1012], [1497, 1011], [1575, 1112], [1664, 1043]]);
  s += runner(147, 877) + runner(791, 875) + runner(1356, 875);
  s += ribbon.map(ribbonShape).join('');
  s += crosses([[558, 1182], [583, 1182], [712, 1182]]);
  s += `<polyline fill="none" stroke="#ff0000" stroke-width="2.5" points="${bars.map((b, n) => X(n) + ',' + b.slice(1)).join(' ')}"/>`;
  bars.forEach((b, n) => {
    const x = X(n), y = Number(b.slice(1));
    s += `<circle cx="${x}" cy="1170" r="3" fill="#f000f0"/>`;
    if (b[0] !== '-') s += `<path d="M${x} 1171V${y}" stroke="${barColor[b[0]]}" stroke-width="5"/>`;
    s += `<circle cx="${x}" cy="1171" r="2" fill="#f000f0"/>`;
  });
  s += crosses([[31, 1182], [121, 1182], [288, 1182], [403, 1182], [918, 1182], [1008, 1182], [1150, 1182], [1176, 1182], [1252, 1182], [1342, 1182], [1600, 1182], [1664, 1043]]);
  s += '<path class="axis" d="M1711 791V1281M1786 791V1281M0 1282H1787M0 1306H1787" stroke-width="3"/><path d="M.5 791V1282" stroke="#444"/>';
  s += '<rect x="1713" y="848" width="72" height="24" fill="#000080" stroke="#a00000"/><text class="note" x="1713" y="866">78.41</text>';
  for (const x of [265, 332, 400, 540, 615, 689, 826, 891, 956, 1076, 1130, 1185]) s += `<path class="axis" d="M${x} 1282v4"/>`;
  for (const x of [198, 467, 708, 1020]) s += `<path class="axis" d="M${x} 1282v24"/>`;
  s += '<rect x="709" y="1283" width="116" height="22" fill="#000090"/><text class="note" x="710" y="1300">2023/08/28/一</text>';
  for (const [x, t] of [[6, '2023年'], [199, '7'], [468, '8'], [1022, '10']]) s += `<text class="scale" x="${x}" y="1301">${t}</text>`;
  document.getElementById('wave').innerHTML = s;
}

drawPrice();
drawWave();
```
